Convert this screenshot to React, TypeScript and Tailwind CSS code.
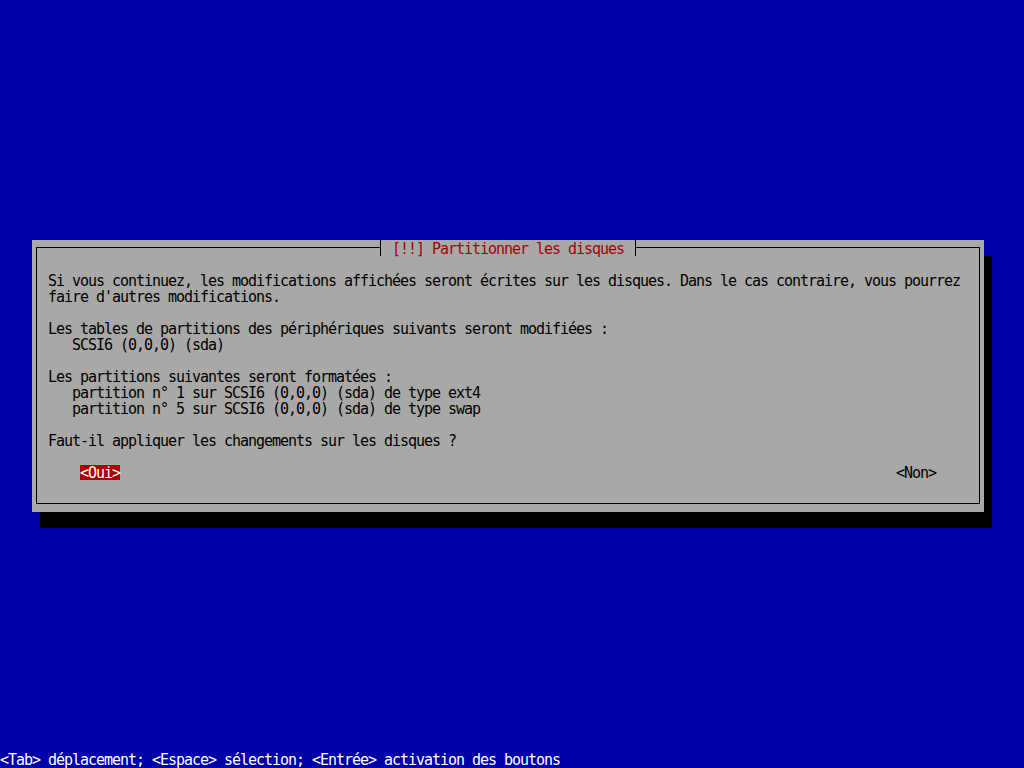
const bodyLines = [
  "Si vous continuez, les modifications affichées seront écrites sur les disques. Dans le cas contraire, vous pourrez",
  "faire d'autres modifications.",
  "",
  "Les tables de partitions des périphériques suivants seront modifiées :",
  "   SCSI6 (0,0,0) (sda)",
  "",
  "Les partitions suivantes seront formatées :",
  "   partition n° 1 sur SCSI6 (0,0,0) (sda) de type ext4",
  "   partition n° 5 sur SCSI6 (0,0,0) (sda) de type swap",
  "",
  "Faut-il appliquer les changements sur les disques ?",
  "",
];

export default function App() {
  return (
    <div className="flex h-[768px] w-[1024px] flex-col overflow-hidden bg-[#0000a8] font-['DejaVu_Sans_Mono',monospace] text-[15px] leading-[16px] tracking-[-1.03px]">
      <div className="pl-[32px] pt-[240px]">
        {/* dialog box with console-style drop shadow */}
        <div className="relative h-[272px] w-[952px] bg-[#a8a8a8] px-[4px] pt-[7px] shadow-[8px_16px_0_0_#000]">
          <div className="h-[257px] border border-black pl-[11px] pt-[24px] text-black">
            {bodyLines.map((line, i) => (
              <div key={i} className="h-[16px] whitespace-pre pt-[1px]">
                {line}
              </div>
            ))}
            <div className="flex h-[16px] justify-between pl-[32px] pr-[43px] pt-[1px]">
              <span className="bg-[#a80000] text-white">{"<Oui>"}</span>
              <span className="text-black">{"<Non>"}</span>
            </div>
          </div>

          {/* title sits over the top border */}
          <div className="absolute left-[348px] top-0 h-[16px] border-l border-r border-black bg-[#a8a8a8] px-[11px] pt-[1px] whitespace-pre text-[#a80000]">
            [!!] Partitionner les disques
          </div>
        </div>
      </div>

      <div className="mt-auto h-[16px] whitespace-pre text-white">
        {"<Tab> déplacement; <Espace> sélection; <Entrée> activation des boutons"}
      </div>
    </div>
  );
}
